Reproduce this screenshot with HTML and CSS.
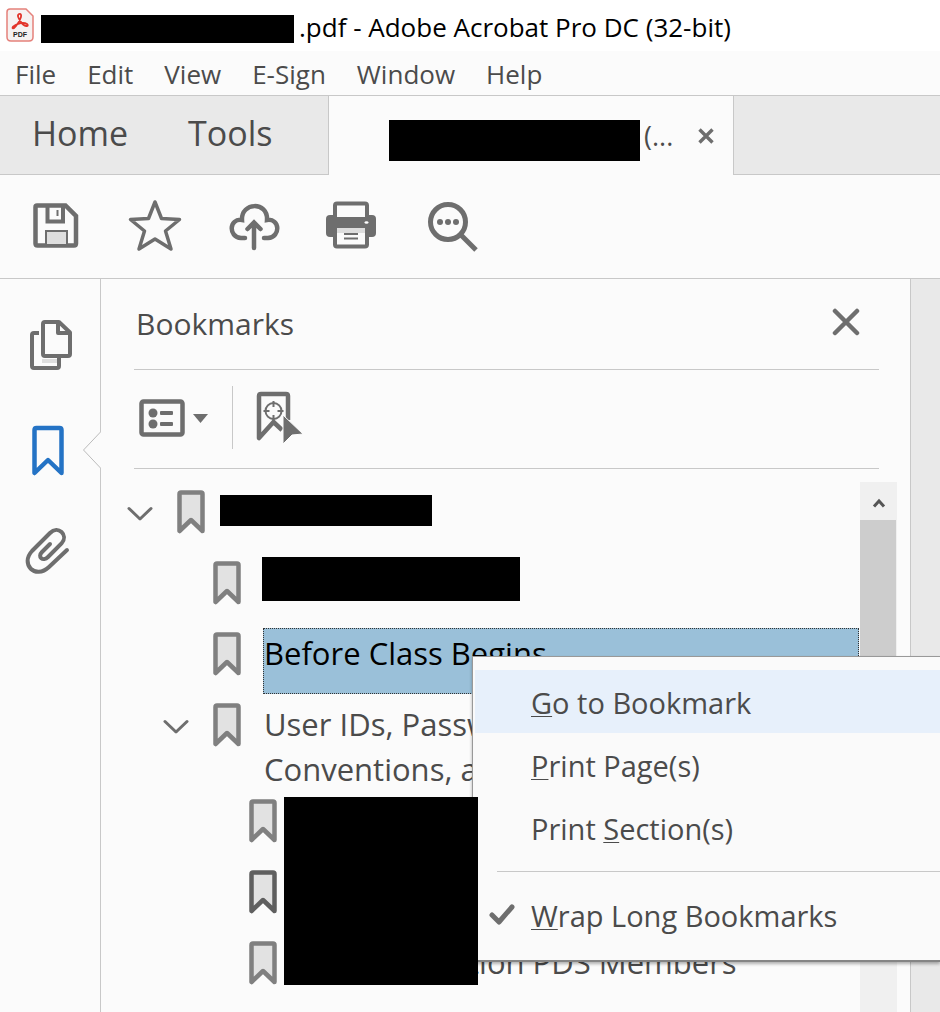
FILE: index.html
```html
<!DOCTYPE html>
<html lang="en">
<head>
    <meta charset="UTF-8">
    <meta name="viewport" content="width=device-width, initial-scale=1.0">
    <title>Adobe Acrobat Pro DC (32-bit)</title>
    <link rel="stylesheet" href="styles.css">
</head>
<body>
    <!-- Shared bookmark shape -->
    <svg class="defs" aria-hidden="true">
        <symbol id="bookmark" viewBox="0 0 28 44">
            <path d="M2.5 41V4Q2.5 2.5 4 2.5H24Q25.5 2.5 25.5 4V41L14 30Z" stroke="currentColor" stroke-width="4.5" stroke-linejoin="round"/>
        </symbol>
        <symbol id="chevron" viewBox="0 0 26 16">
            <path d="M2 3.5L13 14L24 3.5" fill="none" stroke="#6e6e6e" stroke-width="3" stroke-linecap="round" stroke-linejoin="round"/>
        </symbol>
    </svg>

    <header class="title-bar">
        <svg class="app-icon" viewBox="0 0 28 34" aria-hidden="true">
            <path d="M4 1H20L27 8V29Q27 33 23 33H5Q1 33 1 29V4Q1 1 4 1Z" fill="#f6f2f1" stroke="#e5817b" stroke-width="1.5"/>
            <path d="M13 6C17 5 15 12 10 18C7 22 5 20 8 18C12 15 18 14 21 16C24 19 18 19 15 14C12 10 11 7 13 6Z" fill="none" stroke="#e2352b" stroke-width="1.8"/>
            <text x="14" y="29" class="app-icon-text">PDF</text>
        </svg>
        <span class="redacted redacted-title"></span>
        <span class="window-title">.pdf - Adobe Acrobat Pro DC (32-bit)</span>
    </header>

    <nav class="menu-bar" aria-label="Main menu">
        <button>File</button>
        <button>Edit</button>
        <button>View</button>
        <button>E-Sign</button>
        <button>Window</button>
        <button>Help</button>
    </nav>

    <div class="tabs">
        <div class="tabs-main">
            <button class="tab">Home</button>
            <button class="tab">Tools</button>
        </div>
        <div class="tab-doc">
            <span class="redacted redacted-tab"></span>
            <span class="tab-name">(...</span>
            <button class="icon-btn" aria-label="Close tab">
                <svg width="16" height="16" viewBox="0 0 16 16"><path d="M1.500 1.500L14.500 14.500M14.500 1.500L1.500 14.500" stroke="#6e6e6e" stroke-width="3.4"/></svg>
            </button>
        </div>
        <div class="tabs-rest"></div>
    </div>

    <div class="toolbar">
        <button class="icon-btn" aria-label="Save">
            <svg width="54" height="54" viewBox="0 -1 54 54" fill="none" stroke="#6e6e6e">
                <path d="M8 6.500H36.500L47 17V44.500Q47 46.500 45 46.500H8.500Q6.500 46.500 6.500 44.500V8Q6.500 6.500 8 6.500Z" stroke-width="4.500"/>
                <path d="M18.500 7V22.500H34V7" stroke-width="4"/>
                <path d="M28.500 11V17" stroke-width="2"/>
                <path d="M17 45V32H38V45" fill="#dedede" stroke-width="2"/>
            </svg>
        </button>
        <button class="icon-btn" aria-label="Star">
            <svg width="54" height="54" viewBox="0 0 54 54"><path d="M27 4L33.500 20.500L51.500 21.500L37.500 33L43 51L27 41L11 51L16.500 33L2.500 21.500L20.500 20.500Z" fill="none" stroke="#6e6e6e" stroke-width="3.500" stroke-linejoin="round"/></svg>
        </button>
        <button class="icon-btn" aria-label="Upload to cloud">
            <svg width="54" height="54" viewBox="0 0 54 54" fill="none" stroke="#6e6e6e" stroke-width="4.500" stroke-linecap="round">
                <path d="M18 40H14C1 39 2 20 15 22C14 4 41 3 40 22C53 20 54 39 41 40H37"/>
                <path d="M27 50V25M20.500 31L27 24.500L33.500 31"/>
            </svg>
        </button>
        <button class="icon-btn" aria-label="Print">
            <svg width="54" height="54" viewBox="2 0 54 54" fill="none" stroke="#6e6e6e">
                <path d="M6 17H48Q52 17 52 21V35Q52 39 48 39H6Q2 39 2 35V21Q2 17 6 17Z" fill="#6e6e6e" stroke="none"/>
                <rect x="11" y="5.500" width="32" height="43" rx="2" fill="#fbfbfb" stroke-width="4"/>
                <rect x="9" y="19" width="36" height="11" fill="#6e6e6e" stroke="none"/>
                <rect x="13" y="30" width="28" height="5" fill="#dedede" stroke="none"/>
                <ellipse cx="42.500" cy="24.500" rx="2" ry="1.300" fill="#fff" stroke="none"/>
                <path d="M20 36H34M20 40.500H34" stroke-width="2"/>
            </svg>
        </button>
        <button class="icon-btn" aria-label="Find">
            <svg width="54" height="54" viewBox="-1 0 54 54" fill="none" stroke="#6e6e6e">
                <circle cx="22" cy="24" r="17.500" stroke-width="5"/>
                <path d="M35 37L50 52" stroke-width="5"/>
                <g fill="#6e6e6e" stroke="none"><circle cx="14" cy="24" r="3"/><circle cx="22" cy="24" r="3"/><circle cx="30" cy="24" r="3"/></g>
            </svg>
        </button>
    </div>

    <main class="workspace">
        <nav class="rail" aria-label="Panels">
            <button class="icon-btn" aria-label="Page thumbnails">
                <svg width="50" height="52" viewBox="-5 0 50 52" fill="none" stroke="#6e6e6e" stroke-width="4" stroke-linejoin="round">
                    <path d="M11 14H6Q4 14 4 16V47Q4 49 6 49H29Q31 49 31 47V39"/>
                    <path d="M14 42H29" stroke="#dedede"/>
                    <path d="M17 3H31L42 13.500V35Q42 37 40 37H17Q15 37 15 35V5Q15 3 17 3Z"/>
                    <path d="M30 3V14H42"/>
                </svg>
            </button>
            <button class="icon-btn rail-active" aria-label="Bookmarks">
                <svg width="32" height="51" viewBox="0 0 32 51"><path d="M2.500 48V5Q2.500 3 4.500 3H27.500Q29.500 3 29.500 5V48L16 35Z" fill="none" stroke="currentColor" stroke-width="4.500" stroke-linejoin="round"/></svg>
            </button>
            <button class="icon-btn" aria-label="Attachments">
                <svg class="clip" width="46" height="50" viewBox="1 3 46 50"><path d="M26 17L18 25C13 30 19 35 24 30L37.500 16.500C45 8 34-2 26 6L8 24C-4 37 11 53 25 40L43 23" fill="none" stroke="#6e6e6e" stroke-width="4" stroke-linecap="round"/></svg>
            </button>
            <svg class="rail-pointer" width="19" height="36" viewBox="0 0 19 36" aria-hidden="true">
                <path d="M18 0H19V36H18Z" fill="#fbfbfb"/>
                <path d="M18.500 0L1.500 18L18.500 36" fill="none" stroke="#bbb"/>
            </svg>
        </nav>

        <section class="panel">
            <div class="panel-header">
                <h1>Bookmarks</h1>
                <button class="icon-btn" aria-label="Close panel">
                    <svg width="28" height="28" viewBox="0 0 28 28"><path d="M3 3L25 25M25 3L3 25" stroke="#6e6e6e" stroke-width="4.500" stroke-linecap="round"/></svg>
                </button>
            </div>
            <div class="panel-tools">
                <button class="icon-btn options" aria-label="Options">
                    <svg width="70" height="40" viewBox="0 0 70 40">
                        <rect x="2.500" y="3.500" width="41" height="33" rx="2" fill="none" stroke="#6e6e6e" stroke-width="4.500"/>
                        <g fill="#6e6e6e"><circle cx="14" cy="15" r="4.500"/><circle cx="14" cy="26" r="4.500"/><rect x="21" y="13" width="13" height="4" rx="1"/><rect x="21" y="24" width="13" height="4" rx="1"/><path d="M54 16H69L61.500 25Z"/></g>
                    </svg>
                </button>
                <span class="divider"></span>
                <button class="icon-btn" aria-label="Find current bookmark">
                    <svg width="48" height="54" viewBox="1 1 48 54">
                        <path d="M27 40L18.500 32L4 48V6Q4 4 6 4H31Q33 4 33 6V30" fill="none" stroke="#6e6e6e" stroke-width="4.500" stroke-linejoin="round"/>
                        <g fill="none" stroke="#6e6e6e" stroke-width="2"><circle cx="18.500" cy="21" r="8"/><path d="M18.500 11V17M18.500 25V31M8.500 21H14.500M22.500 21H28.500"/></g>
                        <path d="M28 25L48 44L37 45L28 54Z" fill="#6e6e6e" stroke="#fbfbfb"/>
                    </svg>
                </button>
            </div>

            <div class="panel-body">
                <ul class="tree">
                    <li class="level-1">
                        <button class="toggle" aria-label="Collapse"><svg width="26" height="16"><use href="#chevron"/></svg></button>
                        <svg class="mark"><use href="#bookmark"/></svg>
                        <span class="redacted redacted-root"></span>
                    </li>
                    <li class="level-2">
                        <svg class="mark"><use href="#bookmark"/></svg>
                        <span class="redacted redacted-child"></span>
                    </li>
                    <li class="level-2">
                        <svg class="mark"><use href="#bookmark"/></svg>
                        <a class="label selected" href="#">Before Class Begins</a>
                    </li>
                    <li class="level-2">
                        <button class="toggle" aria-label="Collapse"><svg width="26" height="16"><use href="#chevron"/></svg></button>
                        <svg class="mark"><use href="#bookmark"/></svg>
                        <a class="label" href="#">User IDs, Passw<br>Conventions, a</a>
                    </li>
                    <li class="level-3">
                        <svg class="mark"><use href="#bookmark"/></svg>
                    </li>
                    <li class="level-3">
                        <svg class="mark mark-dark"><use href="#bookmark"/></svg>
                    </li>
                    <li class="level-3">
                        <svg class="mark"><use href="#bookmark"/></svg>
                        <a class="label label-tail" href="#">tion PDS Members</a>
                    </li>
                </ul>
                <div class="scrollbar">
                    <button class="icon-btn" aria-label="Scroll up">
                        <svg width="14" height="10" viewBox="0 0 14 10"><path d="M2 8.500L7 3L12 8.500" fill="none" stroke="#555" stroke-width="3"/></svg>
                    </button>
                    <div class="thumb"></div>
                </div>
            </div>
        </section>

        <div class="document"></div>

        <!-- Context menu -->
        <div class="context-menu" role="menu">
            <button class="menu-item active" role="menuitem"><span><u>G</u>o to Bookmark</span></button>
            <button class="menu-item" role="menuitem"><span><u>P</u>rint Page(s)</span></button>
            <button class="menu-item" role="menuitem"><span>Print <u>S</u>ection(s)</span></button>
            <hr>
            <button class="menu-item" role="menuitemcheckbox" aria-checked="true">
                <svg class="check" width="26" height="22" viewBox="0 0 26 22"><path d="M3 11L10 18L23 3" fill="none" stroke="#6e6e6e" stroke-width="5" stroke-linecap="round" stroke-linejoin="round"/></svg>
                <span><u>W</u>rap Long Bookmarks</span>
            </button>
        </div>
        <div class="redacted redacted-block"></div>
    </main>
</body>
</html>
```
FILE: styles.css
```css
* {
    box-sizing: border-box;
}
body {
    margin: 0;
    height: 100vh;
    display: flex;
    flex-direction: column;
    overflow: hidden;
    font-family: "Open Sans", "Noto Sans", sans-serif;
    font-size: 29px;
    color: #4b4b4b;
    background: #fbfbfb;
}
button {
    padding: 0;
    border: none;
    background: none;
    font: inherit;
    color: inherit;
    white-space: nowrap;
}
a {
    color: inherit;
    text-decoration: none;
}
svg {
    display: block;
    flex-shrink: 0;
}
.defs {
    position: absolute;
    width: 0;
    height: 0;
}
.icon-btn {
    display: flex;
    align-items: center;
    justify-content: center;
}
.redacted {
    display: block;
    flex-shrink: 0;
    background: #000;
}

/* Title bar */
.title-bar {
    display: flex;
    align-items: center;
    height: 51px;
    padding: 0 6px 2px;
    background: #fff;
    color: #000;
    font-size: 26px;
    white-space: nowrap;
}
.app-icon {
    width: 28px;
    height: 34px;
}
.app-icon-text {
    font: bold 7px "Liberation Sans", sans-serif;
    text-anchor: middle;
    fill: #222;
}
.redacted-title {
    width: 253px;
    height: 28px;
    margin: 8px 5px 0 7px;
}
.window-title {
    padding-top: 4px;
}

/* Menu bar */
.menu-bar {
    display: flex;
    gap: 31px;
    height: 45px;
    padding: 1px 15px 0;
    border-bottom: 1px solid #c8c8c8;
    font-size: 26px;
}

/* Tabs */
.tabs {
    display: flex;
    height: 79px;
}
.tabs-main {
    display: flex;
    gap: 60px;
    width: 329px;
    padding: 0 32px 4px;
    background: #e9e9e9;
    border-right: 1px solid #c8c8c8;
    border-bottom: 1px solid #c8c8c8;
    font-size: 34px;
}
.tab-doc {
    display: flex;
    align-items: center;
    width: 404px;
    padding-left: 60px;
    font-size: 27px;
}
.tab-doc .icon-btn {
    margin-left: 25px;
}
.redacted-tab {
    width: 251px;
    height: 41px;
    margin: 10px 4px 0 0;
}
.tabs-rest {
    flex: 1;
    background: #e9e9e9;
    border-left: 1px solid #c8c8c8;
    border-bottom: 1px solid #c8c8c8;
}

/* Toolbar */
.toolbar {
    display: flex;
    align-items: center;
    gap: 45px;
    height: 104px;
    padding: 0 29px 3px;
    border-bottom: 1px solid #c8c8c8;
}

/* Workspace */
.workspace {
    position: relative;
    display: flex;
    flex: 1;
    min-height: 0;
}
.rail {
    position: relative;
    display: flex;
    flex-direction: column;
    align-items: center;
    gap: 54px;
    width: 101px;
    padding: 40px 5px 0 0;
    border-right: 1px solid #c8c8c8;
}
.rail-active {
    color: #2473c5;
}
.clip {
    overflow: visible;
}
.rail-pointer {
    position: absolute;
    top: 153px;
    right: -1px;
}
.panel {
    display: flex;
    flex-direction: column;
    flex: 1;
    min-width: 0;
    padding-left: 33px;
}
.panel-header,
.panel-tools {
    display: flex;
    align-items: center;
    margin-right: 31px;
    border-bottom: 1px solid #c8c8c8;
}
.panel-header {
    justify-content: space-between;
    height: 91px;
    padding: 0 19px 4px 2px;
}
.panel-header h1 {
    margin: 0;
    padding-top: 2px;
    font-size: 30px;
    font-weight: 400;
}
.panel-tools {
    height: 99px;
    padding: 0 0 3px 5px;
}
.divider {
    width: 1px;
    height: 63px;
    margin: 0 23px;
    background: #c8c8c8;
}
.panel-body {
    display: flex;
    flex: 1;
    min-height: 0;
    margin-top: 13px;
    padding-right: 13px;
}

/* Bookmark tree */
.tree {
    flex: 1;
    margin: 0;
    padding: 4px 1px 0 0;
    list-style: none;
    font-size: 31px;
    line-height: 45px;
}
.tree li {
    display: flex;
    align-items: flex-start;
    min-height: 71px;
    padding-bottom: 3px;
}
.level-1 {
    padding-left: 43px;
}
.level-2 {
    padding-left: 79px;
}
.level-3 {
    padding-left: 115px;
}
.toggle {
    width: 26px;
    margin: 19px 24px 0 -50px;
}
.mark {
    width: 28px;
    height: 44px;
    margin: 4px 22px 0 0;
    color: #808080;
    fill: #e2e2e2;
}
.mark-dark {
    color: #5f5f5f;
}
.label {
    flex: 1;
    min-height: 66px;
    padding: 3px 1px 0;
    white-space: nowrap;
    overflow: hidden;
}
.selected {
    color: #000;
    background: #9ac0d9;
    outline: 1px dotted #333;
    outline-offset: -1px;
}
.label-tail {
    padding-left: 169px;
}
.redacted-root {
    width: 212px;
    height: 31px;
    margin: 9px 0 0 -7px;
}
.redacted-child {
    width: 258px;
    height: 44px;
    margin-left: -1px;
}

/* Scrollbar */
.scrollbar {
    width: 37px;
    background: #f0f0f0;
}
.scrollbar .icon-btn {
    width: 37px;
    height: 38px;
    padding-top: 4px;
}
.thumb {
    width: 36px;
    height: 240px;
    background: #cdcdcd;
}
.document {
    width: 30px;
    background: #e9e9e9;
    border-left: 1px solid #c8c8c8;
}

/* Context menu */
.context-menu {
    position: absolute;
    top: 377px;
    left: 472px;
    right: 0;
    padding: 13px 0 14px 2px;
    background: #fafafa;
    border: 1px solid #999;
    border-right: none;
    border-bottom: 2px solid #858585;
    box-shadow: 0 2px 3px rgba(0, 0, 0, 0.3);
}
.menu-item {
    position: relative;
    display: flex;
    align-items: center;
    width: 100%;
    height: 63px;
    padding: 1px 0 0 56px;
}
.menu-item.active {
    background: #e7f0fb;
}
.menu-item u {
    text-decoration-thickness: 1px;
    text-underline-offset: 2px;
}
.context-menu hr {
    height: 1px;
    margin: 12px 0 11px 22px;
    border: none;
    background: #c8c8c8;
}
.check {
    position: absolute;
    top: 21px;
    left: 14px;
}
.redacted-block {
    position: absolute;
    top: 518px;
    left: 284px;
    width: 194px;
    height: 188px;
}
```
